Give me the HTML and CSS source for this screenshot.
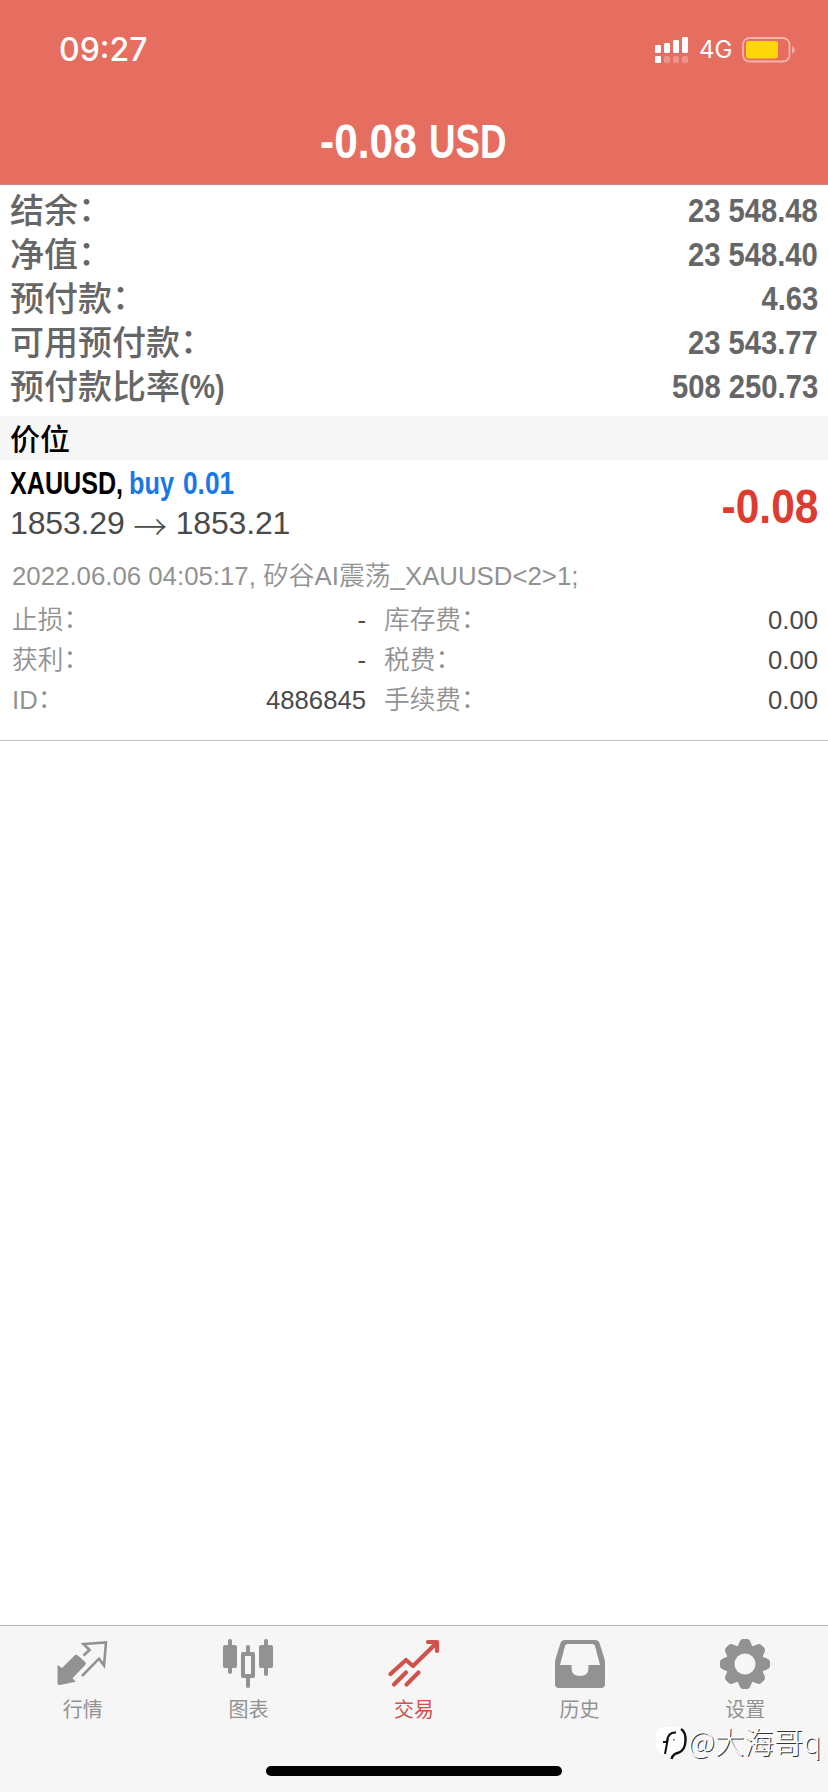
FILE: index.html
```html
<!DOCTYPE html>
<html lang="zh-CN">
<head>
<meta charset="utf-8">
<title>交易</title>
<link rel="stylesheet" href="styles.css">
</head>
<body>
<div class="screen">
  <header class="top">
    <div class="status">
      <span class="time">09:27</span>
      <svg class="signal" width="34" height="27" viewBox="0 0 34 27" fill="#fff">
        <rect x="0" y="8" width="6" height="8" rx="1.2"/><rect x="9" y="6" width="6" height="10" rx="1.2"/><rect x="18" y="3" width="6" height="13" rx="1.2"/><rect x="27" y="0" width="6" height="16" rx="1.2"/>
        <rect x="0" y="19" width="6" height="7" rx="1.2"/>
        <g opacity=".25"><rect x="9" y="19" width="6" height="7" rx="1.5"/><rect x="18" y="19" width="6" height="7" rx="1.5"/><rect x="27" y="19" width="6" height="7" rx="1.5"/></g>
      </svg>
      <span class="net">4G</span>
      <svg class="battery" width="54" height="26" viewBox="0 0 54 26">
        <rect x="1" y="1" width="46.5" height="23.5" rx="6.5" fill="none" stroke="#f7b3aa" stroke-width="1.8"/>
        <rect x="4" y="4" width="32" height="17.5" rx="3" fill="#ffd60a"/>
        <path d="M50 9v8q3-1.500 3-4t-3-4z" fill="#f2aaa2"/>
      </svg>
    </div>
    <h1 class="title"><span class="t-num">-0.08</span><span class="t-cur">USD</span></h1>
  </header>

  <dl class="summary">
    <div class="row"><dt>结余<i>：</i></dt><dd>23 548.48</dd></div>
    <div class="row"><dt>净值<i>：</i></dt><dd>23 548.40</dd></div>
    <div class="row"><dt>预付款<i>：</i></dt><dd>4.63</dd></div>
    <div class="row"><dt>可用预付款<i>：</i></dt><dd>23 543.77</dd></div>
    <div class="row"><dt>预付款比率<b>(%)</b></dt><dd>508 250.73</dd></div>
  </dl>

  <h2 class="section">价位</h2>

  <article class="order">
    <div class="head">
      <div>
        <div class="symbol"><span class="s-name">XAUUSD,</span><span class="s-side">buy</span><span class="s-vol">0.01</span></div>
        <div class="price"><span>1853.29</span><span class="arrow">→</span><span>1853.21</span></div>
      </div>
      <div class="profit">-0.08</div>
    </div>
    <p class="note">2022.06.06 04:05:17, 矽谷AI震荡_XAUUSD&lt;2&gt;1;</p>
    <div class="details">
      <div class="pair"><span>止损<i>：</i></span><em>-</em></div><div class="pair"><span>库存费<i>：</i></span><em>0.00</em></div>
      <div class="pair"><span>获利<i>：</i></span><em>-</em></div><div class="pair"><span>税费<i>：</i></span><em>0.00</em></div>
      <div class="pair"><span>ID<i>：</i></span><em>4886845</em></div><div class="pair"><span>手续费<i>：</i></span><em>0.00</em></div>
    </div>
  </article>

  <nav class="tabs">
    <a class="tab">
      <svg width="52" height="52" viewBox="0 0 52 52"><path d="M.5 27L5 30 17.500 17.500q1.700-1.500 3.400 0l7.300 6.600q1.500 1.500 0 3L15.500 40.200l3.300 3.500L3 47Q.5 47.300.5 45z" fill="#929292"/><path d="M26.500 17.500l6-5.500-6-6L49 4.500l-2 23-5-6.800L25 38" fill="none" stroke="#929292" stroke-width="2.600"/></svg>
      <span>行情</span>
    </a>
    <a class="tab">
      <svg width="52" height="52" viewBox="0 0 52 52"><g fill="#929292"><rect x="1" y="7" width="14" height="23" rx="2"/><rect x="6" y="1" width="4" height="35" rx="2"/><rect x="37" y="7" width="14" height="23" rx="2"/><rect x="42" y="1" width="4" height="37" rx="2"/><rect x="24" y="7" width="4" height="43" rx="2"/></g><rect x="21" y="16" width="10" height="22" fill="#f6f6f6" stroke="#929292" stroke-width="4" stroke-linejoin="round"/></svg>
      <span>图表</span>
    </a>
    <a class="tab active">
      <svg width="52" height="52" viewBox="0 0 52 52"><g fill="none" stroke="#d0524a" stroke-width="4.200" stroke-linecap="round" stroke-linejoin="round"><path d="M2.500 36L18 22l7 6L49 4.500M40 4h9v9M6 46.500l12-12M18.500 46.500l12-12"/></g></svg>
      <span>交易</span>
    </a>
    <a class="tab">
      <svg width="52" height="52" viewBox="0 0 52 52"><path fill="#929292" fill-rule="evenodd" d="M11 2h30q3.500 0 4.500 3l5 16q.5 2 .5 4v21q0 4-4 4H5q-4 0-4-4V25q0-2 .5-4l5-16Q7.500 2 11 2zM13.500 6q-2 0-2.500 2L6 27h11.500v3q0 8 8.500 8t8.500-8v-3H46L41 8q-.5-2-2.500-2z"/></svg>
      <span>历史</span>
    </a>
    <a class="tab">
      <svg width="52" height="52" viewBox="0 0 52 52"><g fill="#929292"><g id="teeth"><path id="tooth" d="M18 10l3-7q1-2 3-2h4q2 0 3 2l3 7z"/><use href="#tooth" transform="rotate(45 26 26)"/><use href="#tooth" transform="rotate(90 26 26)"/><use href="#tooth" transform="rotate(135 26 26)"/></g><use href="#teeth" transform="rotate(180 26 26)"/><circle cx="26" cy="26" r="19"/></g><circle cx="26" cy="26" r="10.500" fill="#f6f6f6"/></svg>
      <span>设置</span>
    </a>
  </nav>
  <div class="home"></div>
  <div class="mark">
    <svg width="32" height="34" viewBox="0 0 32 34"><rect x="0" y="1" width="28" height="27" rx="8" fill="#fff"/><path d="M7 16h5M12 12l-3 16M11 15Q12 6 20 6.500M18 13.500v.8" fill="none" stroke="#111" stroke-width="2"/><path d="M25 3q5 3 4.500 12T23 26.500q-6 1-7.500 6.500" fill="none" stroke="#111" stroke-width="2.400"/></svg>
    <span>@大海哥q</span>
  </div>
</div>
</body>
</html>
```
FILE: styles.css
```css
* { box-sizing: border-box; margin: 0; padding: 0; }
body { background: #fff; font-family: "Liberation Sans", "Noto Sans CJK SC", sans-serif; }
i, em { font-style: normal; }
.screen { position: relative; width: 828px; height: 1792px; overflow: hidden; display: flex; flex-direction: column; background: #fff; }

.top { height: 185px; background: #e56e61; border-bottom: 1px solid #c9877f; color: #fff; flex: none; }
.status { display: flex; align-items: center; height: 100px; padding: 0 32px 0 59px; }
.time { font: 500 32px/40px Inter, sans-serif; flex: 1; }
.signal { margin-right: 10px; }
.net { font: 400 24px/30px Inter, sans-serif; width: 43px; }
.title { display: flex; height: 84px; padding: 14px 0 0 320px; font-size: 48px; line-height: 56px; font-weight: 700; }
.title span { transform-origin: 0 50%; white-space: nowrap; }
.t-num { width: 109px; transform: scaleX(.885); }
.t-cur { transform: scaleX(.765); }

.summary { padding: 3px 10px 0 10px; height: 231px; color: #666; flex: none; }
.row { display: flex; justify-content: space-between; height: 44px; }
.row dt { font: 500 34px/42px "Noto Sans CJK SC", sans-serif; white-space: nowrap; }
.row dt i { line-height: 1; vertical-align: 2px; }
.row dt b { display: inline-block; font: 700 33px/40px "Liberation Sans", sans-serif; transform: scaleX(.87); transform-origin: 0 50%; vertical-align: 1px; }
.row dd { font-size: 33px; line-height: 45px; font-weight: 700; transform: scaleX(.885); transform-origin: 100% 50%; white-space: nowrap; }

.section { height: 44px; padding-left: 10px; background: #f6f6f6; font: 500 30px/42px "Noto Sans CJK SC", sans-serif; color: #000; flex: none; }

.order { height: 281px; border-bottom: 1px solid #c0c0c0; flex: none; }
.head { display: flex; justify-content: space-between; padding: 3px 10px 0 10px; height: 92px; }
.symbol { display: flex; height: 40px; font-size: 32px; line-height: 40px; font-weight: 700; white-space: nowrap; }
.symbol span { transform-origin: 0 50%; }
.s-name { width: 119px; transform: scaleX(.785); }
.s-side, .s-vol { color: #1a78e4; }
.s-side { width: 54px; transform: scaleX(.79); }
.s-vol { transform: scaleX(.82); }
.price { display: flex; font-size: 32px; height: 40px; line-height: 40px; letter-spacing: -.15px; color: #4a4a4a; white-space: nowrap; }
.arrow { width: 51px; text-align: center; font: 300 34px/46px "Noto Sans CJK SC", sans-serif; }
.profit { font-size: 48px; line-height: 87px; font-weight: 700; color: #de3c31; transform: scaleX(.885); transform-origin: 100% 50%; }
.note { padding-left: 12px; height: 48px; font-size: 25.800px; line-height: 48px; color: #929292; white-space: nowrap; font-weight: 350; }
.details { display: grid; grid-template-columns: 354px 434px; column-gap: 18px; padding-left: 12px; grid-auto-rows: 40px; }
.pair { display: flex; justify-content: space-between; font-size: 25.700px; line-height: 40px; color: #929292; font-weight: 350; }
.pair i { line-height: 1; vertical-align: 1px; }
.pair em { color: #4a4a4a; }

.tabs { margin-top: auto; height: 167px; background: #f6f6f6; border-top: 1px solid #b4b4b4; display: grid; grid-template-columns: repeat(5, 1fr); flex: none; }
.tab { display: flex; flex-direction: column; align-items: center; padding-top: 12px; color: #929292; }
.tab svg { overflow: visible; }
.tab span { margin-top: 4px; font: 400 20px/30px "Noto Sans CJK SC", sans-serif; }
.tab.active { color: #d0524a; }

.home { position: absolute; left: 266px; top: 1766px; width: 296px; height: 10px; border-radius: 5px; background: #000; }
.mark { position: absolute; left: 656px; top: 1726px; display: flex; align-items: flex-start; height: 34px; }
.mark span { font: 300 29.500px/29px "Noto Sans CJK SC", sans-serif; color: #fff; text-shadow: 1px 1px 0 #333; white-space: nowrap; }
```
